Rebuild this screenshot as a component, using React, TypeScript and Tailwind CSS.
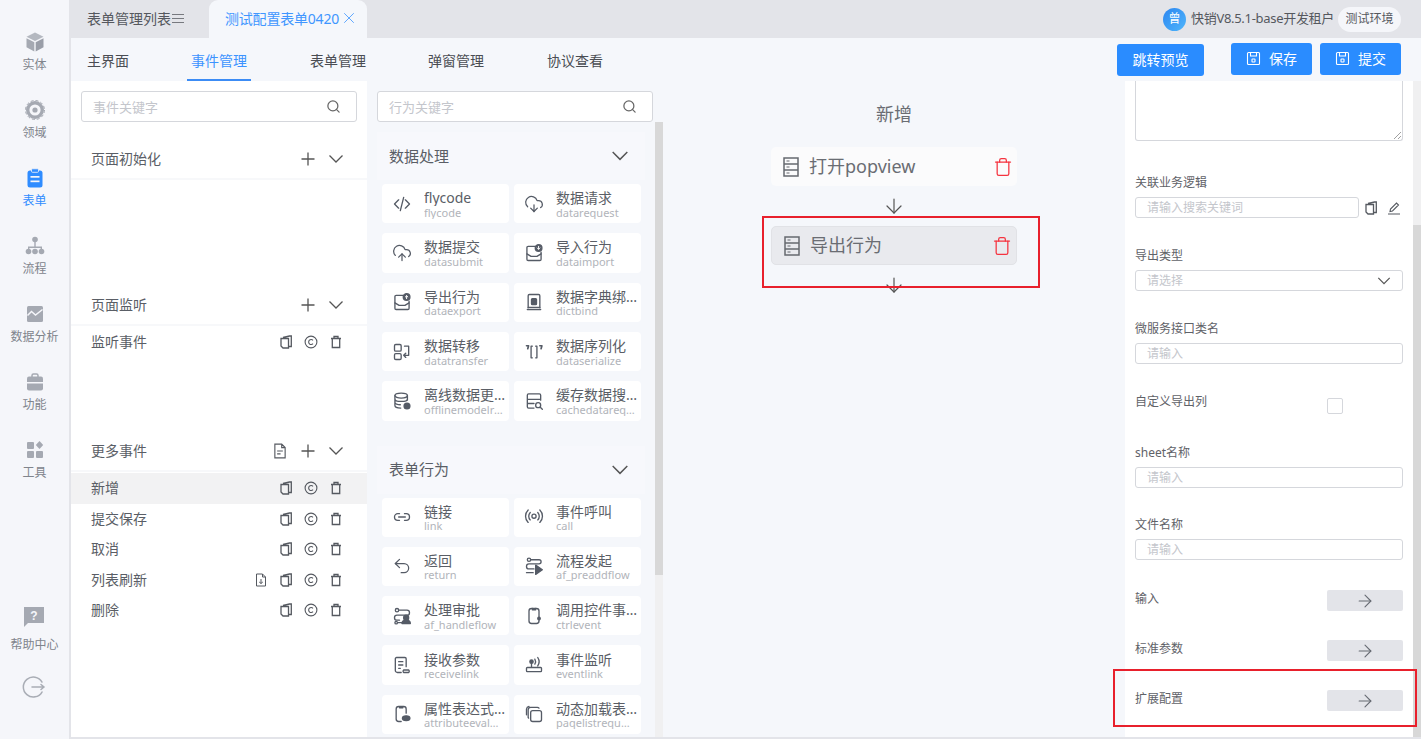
import React from "react";
import { Search, ArrowDown, ArrowRight, Trash, CloudDownload, CloudUpload, Undo2, X } from "lucide-react";

const S = ({ children, size = 20, className = "text-[#555b66]", sw = 1.6 }: { children: React.ReactNode; size?: number; className?: string; sw?: number }) => (
    <svg width={size} height={size} viewBox="0 0 24 24" fill="none" stroke="currentColor" strokeWidth={sw} strokeLinecap="round" strokeLinejoin="round" className={`shrink-0 ${className}`}>
        {children}
    </svg>
);

const Chevron = ({ size = 16, sw = 1.3 }: { size?: number; sw?: number }) => (
    <svg width={size} height={size} viewBox="0 0 16 16" fill="none" stroke="#555" strokeWidth={sw} className="shrink-0"><path d="M1.500 4.500L8 11l6.500-6.500" /></svg>
);
const PlusIcon = () => (
    <svg width="16" height="16" viewBox="0 0 16 16" fill="none" stroke="#555" strokeWidth="1.300" className="shrink-0"><path d="M8 1.500v13M1.500 8h13" /></svg>
);
const SaveIcon = () => (
    <svg width="15" height="15" viewBox="0 0 15 15" fill="none" stroke="#fff" strokeWidth="1.100" className="shrink-0"><path d="M2.500 1.500h10a1 1 0 0 1 1 1v10a1 1 0 0 1-1 1h-10a1 1 0 0 1-1-1v-10a1 1 0 0 1 1-1z" /><path d="M4.500 1.500v3.500h6v-3.500" /><rect x="6" y="8" width="3" height="3" rx="0.500" /></svg>
);

// sidebar icons
const NavBox = () => (
    <svg width="20" height="20" viewBox="0 0 20 20"><path d="M10 0.500l8.500 4.300-8.500 4.300-8.500-4.300z" fill="#b4b8c0" /><path d="M1.500 6.200l7.800 4V19.500L1.500 15.300z" fill="#a5a9b2" /><path d="M18.500 6.200l-7.800 4V19.500l7.800-4.200z" fill="#9a9ea8" /></svg>
);
const NavDomain = () => (
    <svg width="20" height="20" viewBox="0 0 20 20"><circle cx="10" cy="10" r="7.300" fill="none" stroke="#a5a9b2" strokeWidth="3.400" /><circle cx="10" cy="10" r="2.600" fill="#a5a9b2" /><circle cx="10" cy="10" r="9.500" fill="none" stroke="#a5a9b2" strokeWidth="1" strokeDasharray="3 2" /></svg>
);
const NavForm = () => (
    <svg width="20" height="20" viewBox="0 0 20 20"><rect x="2.500" y="2.500" width="15" height="17" rx="2.500" fill="#2f8cff" /><rect x="6.500" y="0.800" width="7" height="3.500" rx="1" fill="#2f8cff" stroke="#f5f6fa" strokeWidth="0.800" /><rect x="5.500" y="8" width="9" height="1.700" fill="#f5f6fa" /><rect x="5.500" y="12.500" width="9" height="1.700" fill="#f5f6fa" /></svg>
);
const NavFlow = () => (
    <svg width="20" height="20" viewBox="0 0 20 20" fill="#a5a9b2"><circle cx="10" cy="3.500" r="2.800" /><rect x="9.300" y="6" width="1.400" height="5" /><path d="M3 13v-2.500h14V13h-1.400v-1.100H4.400V13z" /><circle cx="3.500" cy="15.500" r="2.800" /><circle cx="10" cy="15.500" r="2.800" /><circle cx="16.500" cy="15.500" r="2.800" /></svg>
);
const NavChart = () => (
    <svg width="20" height="20" viewBox="0 0 20 20"><rect x="2" y="2" width="16" height="16" rx="1.500" fill="#a5a9b2" /><path d="M2.500 11.500l4-4 4 3.500 7-5.500" fill="none" stroke="#f5f6fa" strokeWidth="1.500" /></svg>
);
const NavCase = () => (
    <svg width="20" height="20" viewBox="0 0 20 20"><path d="M7 5V3.500A1.500 1.500 0 0 1 8.500 2h3A1.500 1.500 0 0 1 13 3.500V5" fill="none" stroke="#a5a9b2" strokeWidth="1.500" /><rect x="2" y="4.500" width="16" height="14" rx="2" fill="#a5a9b2" /><rect x="2" y="10" width="16" height="1.500" fill="#f5f6fa" /></svg>
);
const NavTools = () => (
    <svg width="20" height="20" viewBox="0 0 20 20" fill="#a5a9b2"><rect x="2" y="2" width="7" height="7" rx="1" /><rect x="2" y="11" width="7" height="7" rx="1" /><rect x="11" y="11" width="7" height="7" rx="1" /><path d="M14.500 1l3.700 4-3.700 4-3.700-4z" /></svg>
);
const NavHelp = () => (
    <svg width="22" height="22" viewBox="0 0 22 22"><path d="M1 1h20v16H5l-4 4z" fill="#a5a9b2" /><text x="11" y="14" textAnchor="middle" fontSize="12" fontWeight="700" fill="#f5f6fa" fontFamily="Liberation Sans, sans-serif">?</text></svg>
);
const NavExit = () => (
    <svg width="24" height="24" viewBox="0 0 24 24" fill="none" stroke="#a9adb5" strokeWidth="1.500" strokeLinecap="round"><path d="M20 7a10 10 0 1 0 0 10" /><path d="M10 12h12M19 9.500l3 2.500-3 2.500" /></svg>
);

// small row icons
const CopyIcon = () => (
    <svg width="14" height="14" viewBox="0 0 14 14" fill="none" stroke="#555960" strokeWidth="1.300" className="shrink-0"><path d="M4 2.500L10.500 1H12.300V11.500H10M2 3.500H9.500V13H4L2 11z" /></svg>
);
const CIcon = () => (
    <svg width="14" height="14" viewBox="0 0 14 14" fill="none" stroke="#555960" strokeWidth="1.100" className="shrink-0"><circle cx="7" cy="7" r="5.900" /><path d="M9 5.300a2.500 2.500 0 1 0 0 3.400" /></svg>
);
const BinIcon = () => (
    <svg width="14" height="14" viewBox="0 0 14 14" fill="none" stroke="#555960" strokeWidth="1.300" className="shrink-0"><path d="M2 3.500h10M5 3V1.500h4V3M3.300 3.500V12.500h7.400V3.500" /></svg>
);
const FileIcon = ({ size = 14 }: { size?: number }) => (
    <svg width={size} height={size} viewBox="0 0 14 14" fill="none" stroke="#555960" strokeWidth="1" className="shrink-0"><path d="M2.500 1h6l3 3v9h-9zM8.500 1v3h3M4.500 7h5M4.500 9.500h3" /></svg>
);
const FileDownIcon = () => (
    <svg width="14" height="14" viewBox="0 0 14 14" fill="none" stroke="#555960" strokeWidth="1" className="shrink-0"><path d="M2.500 1h6l3 3v9h-9zM8.500 1v3h3M7 6v4.500M5.200 9L7 10.500 8.800 9" /></svg>
);
const PenIcon = () => (
    <svg width="14" height="14" viewBox="0 0 14 14" fill="none" stroke="#555960" strokeWidth="1.100" className="shrink-0"><path d="M1 13h12M3 10.500l.5-2.500L9.500 2l2 2-6 6z" /></svg>
);

const SheetIcon = () => (
    <svg width="16" height="20" viewBox="0 0 16 20" fill="none" stroke="#66696f" strokeWidth="1.500" className="shrink-0"><rect x="1" y="1" width="14" height="18" /><path d="M1 7h14M1 13h14" /><path d="M3.500 4h3M3.500 10h3M3.500 16h3" strokeWidth="1.200" /></svg>
);

const MailBadge = ({ mark }: { mark: string }) => (
    <S><path d="M14 4H5a1.500 1.500 0 0 0-1.500 1.500v14A1.500 1.500 0 0 0 5 21h14a1.500 1.500 0 0 0 1.500-1.500V11" /><path d="M3.500 13l5 3h7l5-3" /><circle cx="17.500" cy="6" r="4" fill="currentColor" /><path d={mark} stroke="#fff" strokeWidth="1.200" /></S>
);

const icons: Record<string, React.ReactNode> = {
    flycode: <S><path d="M8 7l-5 5 5 5M16 7l5 5-5 5M14 4l-4 16" /></S>,
    datarequest: <CloudDownload size={20} strokeWidth={1.500} className="text-[#555b66]" />,
    datasubmit: <CloudUpload size={20} strokeWidth={1.500} className="text-[#555b66]" />,
    dataimport: <MailBadge mark="M17.500 4v3.500M16 6l1.500 1.500L19 6" />,
    dataexport: <MailBadge mark="M17.500 8V4.500M16 6l1.500-1.500L19 6" />,
    dictbind: <S><path d="M5 19V4.500A1.500 1.500 0 0 1 6.500 3h11A1.500 1.500 0 0 1 19 4.500V19" /><path d="M4 21h16M5 18.500h14" /><rect x="9" y="8" width="6" height="7" rx="1" fill="currentColor" /></S>,
    datatransfer: <S><rect x="3" y="3" width="8" height="8" rx="1.500" /><rect x="3" y="14" width="8" height="7" rx="1.500" /><path d="M15 5h5v11h-6M16.500 13.500L14 16l2.500 2.500" /></S>,
    dataserialize: <S><path d="M10 5H8.500v14H10M14 5h1.500v14H14" /><path d="M3 4.500h2.500L4.500 8M19 4.500h2.500L20.500 8" strokeWidth="2" /></S>,
    offlinemodelr: <S><ellipse cx="11" cy="5.500" rx="7.500" ry="3" /><path d="M3.500 5.500v12c0 1.700 3.300 3 7 3M18.500 5.500V11M3.500 9.500c0 1.700 3.300 3 7.500 3s7.500-1.300 7.500-3M3.500 13.500c0 1.700 3.300 3 6.500 3" /><circle cx="18" cy="18" r="3.500" fill="currentColor" /></S>,
    cachedatareq: <S><path d="M20 11V5a1.500 1.500 0 0 0-1.500-1.500h-13A1.500 1.500 0 0 0 4 5v14a1.500 1.500 0 0 0 1.500 1.500H12M4 10h16M4 15h8" /><circle cx="17" cy="17" r="3" /><path d="M19.500 19.500L22 22" /></S>,
    link: <S><path d="M9 8H7a4 4 0 0 0 0 8h2M15 8h2a4 4 0 0 1 0 8h-2M8 12h8" /></S>,
    call: <S><circle cx="12" cy="11" r="2.500" /><path d="M7.500 15.500a6.500 6.500 0 0 1 0-9M16.500 6.500a6.500 6.500 0 0 1 0 9M5 18.500a10.500 10.500 0 0 1 0-15M19 3.500a10.500 10.500 0 0 1 0 15" /></S>,
    return: <Undo2 size={20} strokeWidth={1.500} className="text-[#555b66]" />,
    af_preaddflow: <S><path d="M8 4.500h10a2.500 2.500 0 0 1 0 5H6a3 3 0 0 0 0 6h6" /><circle cx="6" cy="4.500" r="2" /><path d="M3 20h8" /><path d="M14 11l8 5.500-8 5.500z" fill="currentColor" /></S>,
    af_handleflow: <S><path d="M8 5h10a2 2 0 0 1 0 6H6a3 3 0 0 0 0 6h3" /><circle cx="6" cy="5" r="2" /><circle cx="5" cy="20" r="1.500" /><path d="M7 20h6" /><circle cx="17" cy="14" r="3" fill="currentColor" /><path d="M12 21c0-3 2-4 5-4s5 1 5 4z" fill="currentColor" /></S>,
    ctrlevent: <S><rect x="6" y="3" width="12" height="18" rx="3" /><path d="M10 3v1.500h4V3" /><circle cx="18" cy="15" r="1.500" fill="currentColor" /></S>,
    receivelink: <S><path d="M17 14V4.500A1.500 1.500 0 0 0 15.500 3h-10A1.500 1.500 0 0 0 4 4.500v14A2.500 2.500 0 0 0 6.500 21H11M8 8h5M8 12h5M8 16h2" /><path d="M14 18h6a2 2 0 0 1 0 3h-6a2 2 0 0 1 0-3z" /></S>,
    eventlink: <S><circle cx="9" cy="8" r="2" fill="currentColor" /><path d="M9 10v5M4 15h16a1 1 0 0 1 1 1v3a1 1 0 0 1-1 1H4a1 1 0 0 1-1-1v-3a1 1 0 0 1 1-1zM13 5a6 6 0 0 1 0 6M16.500 3a9 9 0 0 1 0 10" /></S>,
    attributeeval: <S><path d="M17 11V6a3 3 0 0 0-3-3H8a3 3 0 0 0-3 3v12a3 3 0 0 0 3 3h3M9 3v1.500h4V3" /><ellipse cx="17" cy="17" rx="4.500" ry="2.800" fill="currentColor" /></S>,
    paqelistrequ: <S><rect x="8" y="8" width="13" height="13" rx="2.500" /><path d="M5.500 17A2.500 2.500 0 0 1 5 15V7a3 3 0 0 1 3-3h8a2.500 2.500 0 0 1 2 1" /><path d="M3 13V6a3.500 3.500 0 0 1 3-3" /></S>,
};

const nav = [
    { label: "实体", icon: <NavBox /> },
    { label: "领域", icon: <NavDomain /> },
    { label: "表单", icon: <NavForm />, active: true },
    { label: "流程", icon: <NavFlow /> },
    { label: "数据分析", icon: <NavChart /> },
    { label: "功能", icon: <NavCase /> },
    { label: "工具", icon: <NavTools /> },
];

const group1 = [
    ["flycode", "flycode", "flycode"],
    ["数据请求", "datarequest", "datarequest"],
    ["数据提交", "datasubmit", "datasubmit"],
    ["导入行为", "dataimport", "dataimport"],
    ["导出行为", "dataexport", "dataexport"],
    ["数据字典绑定", "dictbind", "dictbind"],
    ["数据转移", "datatransfer", "datatransfer"],
    ["数据序列化", "dataserialize", "dataserialize"],
    ["离线数据更新行为", "offlinemodelrefresh", "offlinemodelr"],
    ["缓存数据搜索行为", "cachedatarequest", "cachedatareq"],
];

const group2 = [
    ["链接", "link", "link"],
    ["事件呼叫", "call", "call"],
    ["返回", "return", "return"],
    ["流程发起", "af_preaddflow", "af_preaddflow"],
    ["处理审批", "af_handleflow", "af_handleflow"],
    ["调用控件事件行为", "ctrlevent", "ctrlevent"],
    ["接收参数", "receivelink", "receivelink"],
    ["事件监听", "eventlink", "eventlink"],
    ["属性表达式计算", "attributeevaluate", "attributeeval"],
    ["动态加载表单数据", "paqelistrequest", "paqelistrequ"],
];

const Card = ({ item }: { item: string[] }) => (
    <div className="flex h-[39.4px] min-w-0 items-center rounded bg-white pl-[10px]">
        <span className="flex w-[32px] shrink-0">{icons[item[2]]}</span>
        <div className="flex min-w-0 flex-1 flex-col">
            <span className="max-w-[82px] truncate pt-[1.5px] text-[14px] leading-[15.5px] text-[#5a5e66]">{item[0]}</span>
            <span className="max-w-[79px] truncate text-[11px] leading-[13px] text-[#b1b4ba]">{item[1]}</span>
        </div>
    </div>
);

const GroupHead = ({ title }: { title: string }) => (
    <div className="flex h-[48px] items-center justify-between bg-[#f7f8fc] pl-[12px] pr-[16px] text-[15px] text-[#5a5e66]">
        <span>{title}</span>
        <Chevron size={18} />
    </div>
);

const SectionHead = ({ title, file }: { title: string; file?: boolean }) => (
    <div className="flex h-[41px] items-center justify-between border-b-2 border-[#f7f8fa] pl-[20px] pr-[23px] text-[14px] text-[#5a5e66]">
        <span>{title}</span>
        <div className="flex items-center gap-[12px]">
            {file && <FileIcon size={16} />}
            <PlusIcon />
            <Chevron />
        </div>
    </div>
);

const EventRow = ({ title, active, down }: { title: string; active?: boolean; down?: boolean }) => (
    <div className={`flex h-[30.500px] items-center justify-between pl-[20px] pr-[24px] text-[14px] text-[#5a5e66] ${active ? "bg-[#f2f2f3]" : ""}`}>
        <span className="pb-px">{title}</span>
        <div className="flex items-center gap-[11px]">
            {down && <FileDownIcon />}
            <CopyIcon />
            <CIcon />
            <BinIcon />
        </div>
    </div>
);

const Label = ({ children, className = "" }: { children: React.ReactNode; className?: string }) => (
    <div className={`h-[16px] text-[12px] leading-[18px] text-[#5f6268] ${className}`}>{children}</div>
);

const Field = ({ label, hint, className }: { label: string; hint: string; className: string }) => (
    <div className={className}>
        <Label>{label}</Label>
        <div className="mt-[7px] flex h-[21px] items-center rounded-[3px] border border-[#d5d7dc] pl-[11px] pt-px text-[12px] text-[#c4c6cc]">{hint}</div>
    </div>
);

const ArrowRow = ({ label, className }: { label: string; className: string }) => (
    <div className={`flex items-start justify-between ${className}`}>
        <Label className="pt-px">{label}</Label>
        <div className="mt-px flex h-[21px] w-[76px] items-center justify-center rounded-[2px] bg-[#e3e4e9]">
            <ArrowRight size={20} strokeWidth={1.300} className="text-[#666a72]" />
        </div>
    </div>
);

const FlowNode = ({ title, active }: { title: string; active?: boolean }) => (
    <div className={`flex h-[39px] w-[246px] items-center justify-between rounded-[5px] pl-[12px] pr-[4px] ${active ? "border border-[#e1e2e6] bg-[#e9eaee]" : "bg-[#fbfbfc]"}`}>
        <div className="flex items-center gap-[10px] text-[18px] text-[#6a6d73]">
            <SheetIcon />
            <span>{title}</span>
        </div>
        <Trash size={20} strokeWidth={1.500} className="text-[#f5333f]" />
    </div>
);

export default function App() {
    return (
        <div className="flex h-[739px] w-[1421px] overflow-hidden bg-[#f5f7fb] font-['Noto_Sans','Noto_Sans_CJK_SC',sans-serif]">
            {/* Side nav */}
            <aside className="flex h-full w-[71px] shrink-0 flex-col items-center border-r-2 border-[#e3e4e9] bg-[#f5f6fa] pt-[19px] pb-[40px]">
                {nav.map((n) => (
                    <div key={n.label} className="flex h-[68px] w-full flex-col items-center pt-[13px]">
                        {n.icon}
                        <span className={`mt-[5px] text-[12px] leading-[16px] ${n.active ? "text-[#2f8cff]" : "text-[#80848c]"}`}>{n.label}</span>
                    </div>
                ))}
                <div className="mt-auto flex flex-col items-center">
                    <NavHelp />
                    <span className="mt-[9px] text-[12px] leading-[16px] text-[#80848c]">帮助中心</span>
                    <div className="mt-[22px]"><NavExit /></div>
                </div>
            </aside>

            <div className="flex min-w-0 flex-1 flex-col border-b-2 border-[#e3e4e9]">
                {/* Tab strip */}
                <div className="flex h-[38px] shrink-0 items-end bg-[#e3e4e9]">
                    <div className="flex h-full w-[138px] items-center pb-[2px] pl-[16px] text-[14px] text-[#55585e]">
                        表单管理列表
                        <span className="ml-px flex w-[12px] flex-col gap-[3px]">
                            <i className="block h-px bg-[#77797f]" /><i className="block h-px bg-[#77797f]" /><i className="block h-px bg-[#77797f]" />
                        </span>
                    </div>
                    <div className="flex h-full w-[158px] items-center rounded-t-[9px] bg-[#f5f7fb] pb-[2px] pl-[16px] text-[14px] tracking-[-0.2px] text-[#4096ff]">
                        测试配置表单0420
                        <X size={18} strokeWidth={1.100} className="ml-px" />
                    </div>
                    <div className="ml-auto flex h-full items-center pr-[20px]">
                        <span className="flex h-[23px] w-[23px] items-center justify-center rounded-full bg-gradient-to-br from-[#2d86f0] to-[#4fb5fb] text-[12px] text-white">曾</span>
                        <span className="ml-[5px] text-[13px] tracking-[-0.3px] text-[#55585e]">快销V8.5.1-base开发租户</span>
                        <span className="ml-[4px] flex h-[25px] w-[63px] items-center justify-center rounded-full bg-[#f5f6fa] text-[12px] text-[#55585e]">测试环境</span>
                    </div>
                </div>

                {/* Sub tabs and buttons */}
                <div className="flex h-[43px] shrink-0 items-start">
                    <nav className="flex h-full text-[14px] text-[#4a4d53]">
                        <div className="flex w-[116px] items-center pl-[16px] pt-[2px]">主界面</div>
                        <div className="relative flex w-[123px] items-center pl-[4px] pt-[2px] text-[#3c93ff]">
                            <span className="absolute bottom-0 left-0 h-[2px] w-[64px] bg-[#3c8cf5]" />
                            事件管理
                        </div>
                        <div className="flex w-[118px] items-center pt-[2px]">表单管理</div>
                        <div className="flex w-[119px] items-center pt-[2px]">弹窗管理</div>
                        <div className="flex items-center pt-[2px]">协议查看</div>
                    </nav>
                    <div className="ml-auto flex items-start pt-[5px] pr-[20px] text-[14px] text-white">
                        <button className="mt-px flex h-[32px] w-[87px] items-center justify-center rounded-[3px] bg-[#2a8cff] pb-[2px]">跳转预览</button>
                        <button className="ml-[27px] flex h-[32px] w-[81px] items-center justify-center gap-[8px] rounded-[3px] bg-[#2a8cff] pb-[2px]"><SaveIcon />保存</button>
                        <button className="ml-[8px] flex h-[32px] w-[81px] items-center justify-center gap-[8px] rounded-[3px] bg-[#2a8cff] pb-[2px]"><SaveIcon />提交</button>
                    </div>
                </div>

                <div className="relative flex min-h-0 flex-1">
                    {/* Event panel */}
                    <section className="h-full w-[296px] shrink-0 bg-white">
                        <div className="px-[10px] pt-[10px] pb-[17px]">
                            <div className="flex h-[31px] items-center justify-between rounded-[3px] border border-[#d5d7dc] pl-[11px] pr-[15px] text-[13px] text-[#c4c6cc]">
                                <span className="pt-[2px]">事件关键字</span>
                                <Search size={15} strokeWidth={2} className="text-[#666]" />
                            </div>
                        </div>
                        <SectionHead title="页面初始化" />
                        <div className="h-[105px]" />
                        <SectionHead title="页面监听" />
                        <div className="h-[105px] pt-px">
                            <EventRow title="监听事件" />
                        </div>
                        <SectionHead title="更多事件" file />
                        <div className="pt-px">
                            <EventRow title="新增" active />
                            <EventRow title="提交保存" />
                            <EventRow title="取消" />
                            <EventRow title="列表刷新" down />
                            <EventRow title="删除" />
                        </div>
                    </section>

                    {/* Behaviour panel */}
                    <section className="ml-[10px] flex h-full w-[286px] shrink-0 flex-col pt-[10px]">
                        <div className="flex h-[31px] w-[276px] shrink-0 items-center justify-between rounded-[3px] border border-[#d5d7dc] bg-white pl-[11px] pr-[15px] text-[13px] text-[#c4c6cc]">
                            <span className="pt-[2px]">行为关键字</span>
                            <Search size={15} strokeWidth={2} className="text-[#666]" />
                        </div>
                        <div className="flex min-h-0 flex-1 justify-between">
                            <div className="w-[268px] overflow-hidden pt-[10px]">
                                <GroupHead title="数据处理" />
                                <div className="mt-[4px] grid grid-cols-[127px_127px] gap-x-[5px] gap-y-[9.9px] pl-[5px]">
                                    {group1.map((c) => <Card key={c[2]} item={c} />)}
                                </div>
                                <div className="mt-[25px]"><GroupHead title="表单行为" /></div>
                                <div className="mt-[4px] grid grid-cols-[127px_127px] gap-x-[5px] gap-y-[9.9px] pl-[5px]">
                                    {group2.map((c) => <Card key={c[2]} item={c} />)}
                                </div>
                            </div>
                            <div className="h-full w-[8px] bg-[#f0f0f1]">
                                <div className="h-[453px] bg-[#d8d8d8]" />
                            </div>
                        </div>
                    </section>

                    {/* Flow canvas */}
                    <section className="flex h-full w-[462px] shrink-0 flex-col items-center pt-[20px]">
                        <div className="text-[18px] leading-[26px] text-[#6a6d73]">新增</div>
                        <div className="mt-[20px]"><FlowNode title="打开popview" /></div>
                        <div className="flex h-[40px] items-center"><ArrowDown size={24} strokeWidth={1.200} className="text-[#555]" /></div>
                        <FlowNode title="导出行为" active />
                        <div className="flex h-[40px] items-center"><ArrowDown size={24} strokeWidth={1.200} className="text-[#555]" /></div>
                    </section>

                    {/* Property panel */}
                    <section className="h-full w-[288px] shrink-0 bg-white px-[10px]">
                        <div className="relative h-[60px] rounded-b-[3px] border-x border-b border-[#d5d7dc]">
                            <svg width="8" height="8" viewBox="0 0 8 8" className="absolute right-[1px] bottom-[1px]" stroke="#888" strokeWidth="0.800"><path d="M1 8L8 1M5 8l3-3" /></svg>
                        </div>
                        <div className="mt-[33px]">
                            <Label>关联业务逻辑</Label>
                            <div className="mt-[7px] flex items-center">
                                <div className="flex h-[21px] w-[224px] items-center rounded-[3px] border border-[#d5d7dc] pl-[11px] pt-px text-[12px] text-[#c4c6cc]">请输入搜索关键词</div>
                                <span className="ml-[5px]"><CopyIcon /></span>
                                <span className="ml-[9px]"><PenIcon /></span>
                            </div>
                        </div>
                        <div className="mt-[29px]">
                            <Label>导出类型</Label>
                            <div className="mt-[7px] flex h-[21px] items-center justify-between rounded-[3px] border border-[#d5d7dc] pl-[11px] pr-[11px] text-[12px] text-[#c4c6cc]">
                                <span className="pt-px">请选择</span>
                                <Chevron size={14} sw={1.400} />
                            </div>
                        </div>
                        <Field label="微服务接口类名" hint="请输入" className="mt-[29px]" />
                        <div className="mt-[29px] flex h-[24px] items-start">
                            <Label>自定义导出列</Label>
                            <span className="ml-[120px] mt-[5px] h-[16px] w-[16px] rounded-[2px] border border-[#d5d7dc]" />
                        </div>
                        <Field label="sheet名称" hint="请输入" className="mt-[27px]" />
                        <Field label="文件名称" hint="请输入" className="mt-[28px]" />
                        <ArrowRow label="输入" className="mt-[29px]" />
                        <ArrowRow label="标准参数" className="mt-[28px]" />
                        <ArrowRow label="扩展配置" className="mt-[28px]" />
                    </section>

                    <div className="h-full w-[8px] shrink-0 bg-[#f0f0f1] pt-[144px]">
                        <div className="h-full bg-[#d8d8d8]" />
                    </div>

                    {/* Annotation boxes */}
                    <div className="pointer-events-none absolute left-[691px] top-[135px] h-[72px] w-[278px] border-2 border-[#e8202c]" />
                    <div className="pointer-events-none absolute left-[1042px] top-[588px] h-[58px] w-[304px] border-2 border-[#e8202c]" />
                </div>
            </div>
        </div>
    );
}
